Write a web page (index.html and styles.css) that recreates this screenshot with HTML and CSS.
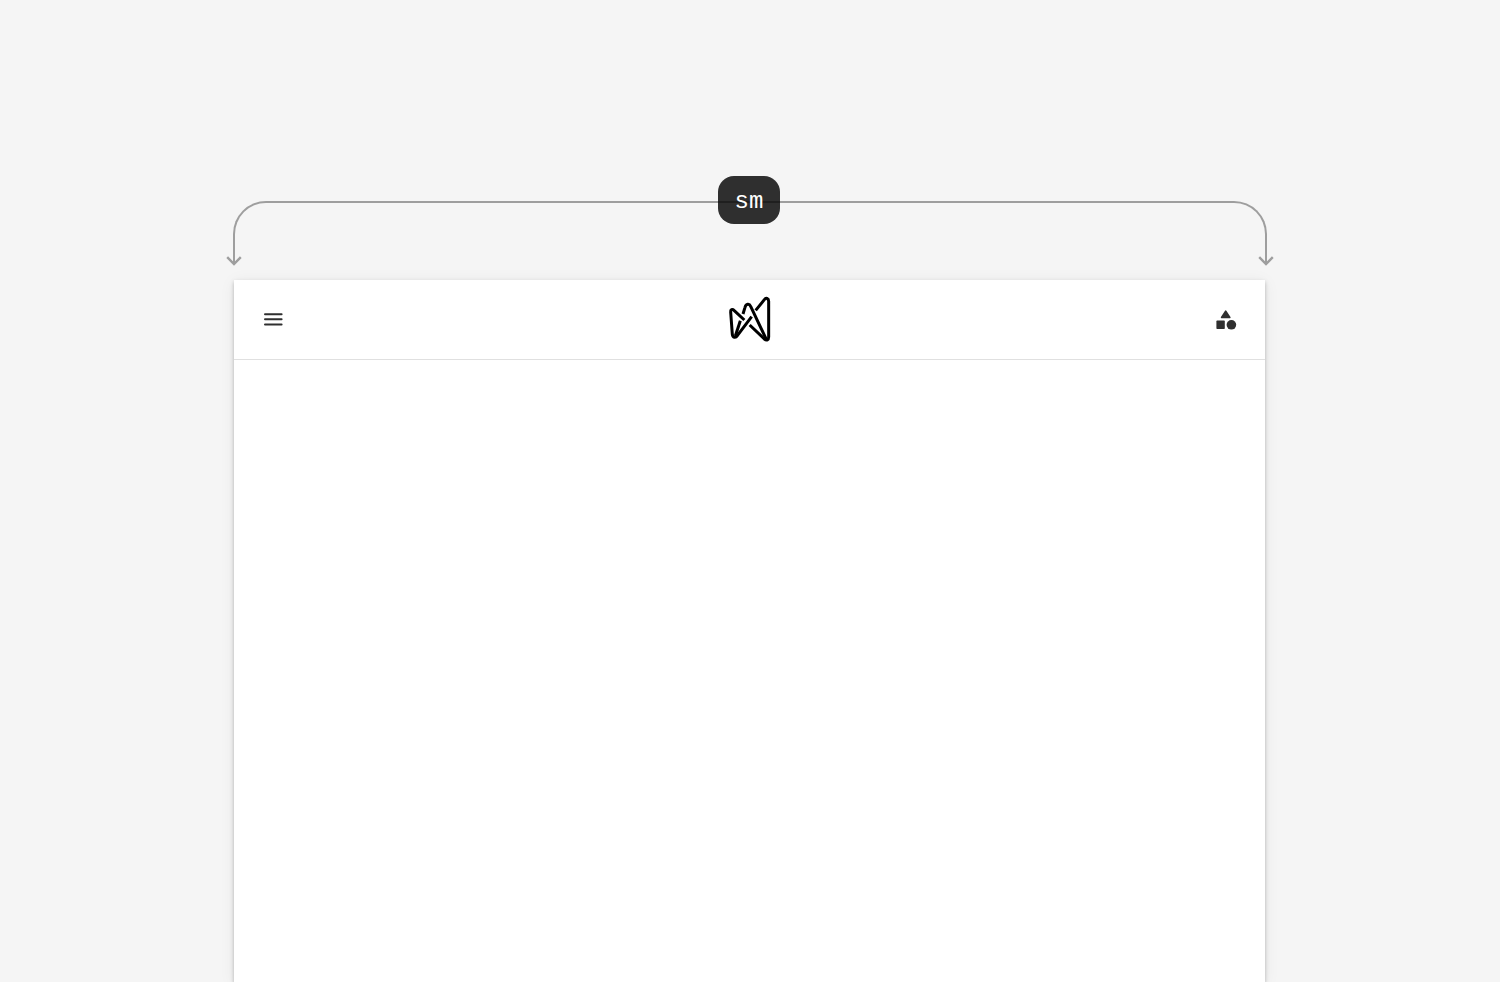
FILE: index.html
```html
<!DOCTYPE html>
<html lang="en">

<head>
    <meta charset="utf-8" />
    <meta name="viewport" content="width=device-width, initial-scale=1">
    <title>Navbar - sm</title>
    <link rel="stylesheet" href="styles.css">
</head>

<body>
    <main class="preview">
        <div class="breakpoint">
            <span class="breakpoint-label">sm</span>
            <svg class="arrow arrow-left" viewBox="0 0 16 10" width="16" height="10">
                <path d="M1.2 1.2 L8 8 L14.8 1.2" />
            </svg>
            <svg class="arrow arrow-right" viewBox="0 0 16 10" width="16" height="10">
                <path d="M1.2 1.2 L8 8 L14.8 1.2" />
            </svg>
        </div>
        <div class="screen">
            <header class="navbar">
                <button class="icon-button" type="button" aria-label="Menu">
                    <svg viewBox="0 0 24 24" width="24" height="24">
                        <path class="menu-lines" d="M4 6.2 H20.6 M4 11.3 H20.6 M4 16.4 H20.6" />
                    </svg>
                </button>
                <a class="logo" href="#" aria-label="Home">
                    <svg viewBox="0 0 180 180" width="60" height="60">
                        <path d="M73 90 L42 61 C37 56 31 59 32 66 L37 133 C38 143 47 145 52 137 L95 80" />
                        <path d="M61 92 L46 138" />
                        <path d="M69 72 L75 52 C78 41 88 40 92 49 L139 148" />
                        <path d="M107 61 L133 29 C138 22 146 25 146 34 L146 141 C146 150 140 153 133 147 L89 105" />
                    </svg>
                </a>
                <button class="icon-button" type="button" aria-label="Components">
                    <svg viewBox="0 0 24 24" width="24" height="24">
                        <path d="M11 2.7 Q11.7 1.6 12.4 2.7 L16.5 9 Q16.9 10.3 15.9 10.3 H7.5 Q6.5 10.3 6.9 9 Z" />
                        <rect x="2.4" y="12.6" width="8.4" height="8.4" rx="0.8" />
                        <circle cx="17.4" cy="16.8" r="4.8" />
                    </svg>
                </button>
            </header>
        </div>
    </main>
</body>

</html>
```
FILE: styles.css
```css
* {
    box-sizing: border-box;
}

body {
    margin: 0;
    background-color: #f5f5f5;
    font-family: "Liberation Mono", monospace;
}

.preview {
    display: flex;
    flex-direction: column;
    gap: 16px;
    max-width: 1032px;
    height: 100vh;
    margin: 0 auto;
    padding-top: 201px;
}

/* line over the screen with an arrow at both ends */
.breakpoint {
    position: relative;
    display: flex;
    justify-content: center;
    height: 63px;
    margin: 0 -1px;
    border: 2px solid #9e9e9e;
    border-bottom: 0;
    border-radius: 33px 33px 0 0;
}

.breakpoint-label {
    position: absolute;
    top: -27px;
    left: calc(50% - 32px);
    width: 62px;
    height: 48px;
    border-radius: 16px;
    background: linear-gradient(#1f1f1f, #1f1f1f) 0 25px / 100% 2px no-repeat #2f2f2f;
    color: #fff;
    font-size: 24px;
    line-height: 52px;
    text-align: center;
}

.arrow {
    position: absolute;
    bottom: -2px;
    fill: none;
    stroke: #9e9e9e;
    stroke-width: 2.4;
}

.arrow-left {
    left: -9px;
}

.arrow-right {
    right: -9px;
}

.screen {
    flex: 1;
    margin-right: 1px;
    background-color: #fff;
    box-shadow: 0 2px 4px rgba(0, 0, 0, 0.25), 0 2px 16px rgba(0, 0, 0, 0.06);
}

.navbar {
    display: flex;
    align-items: center;
    justify-content: space-between;
    height: 80px;
    padding: 0 19px;
    border-bottom: 1px solid #e0e0e0;
}

.icon-button {
    display: flex;
    align-items: center;
    justify-content: center;
    width: 40px;
    height: 40px;
    padding: 0;
    border: 0;
    background: none;
    fill: #2f2f2f;
    cursor: pointer;
}

.menu-lines {
    stroke: #2f2f2f;
    stroke-width: 2;
    stroke-linecap: round;
}

.logo {
    display: flex;
    fill: none;
    stroke: #000;
    stroke-width: 9;
    stroke-linejoin: round;
}
```
